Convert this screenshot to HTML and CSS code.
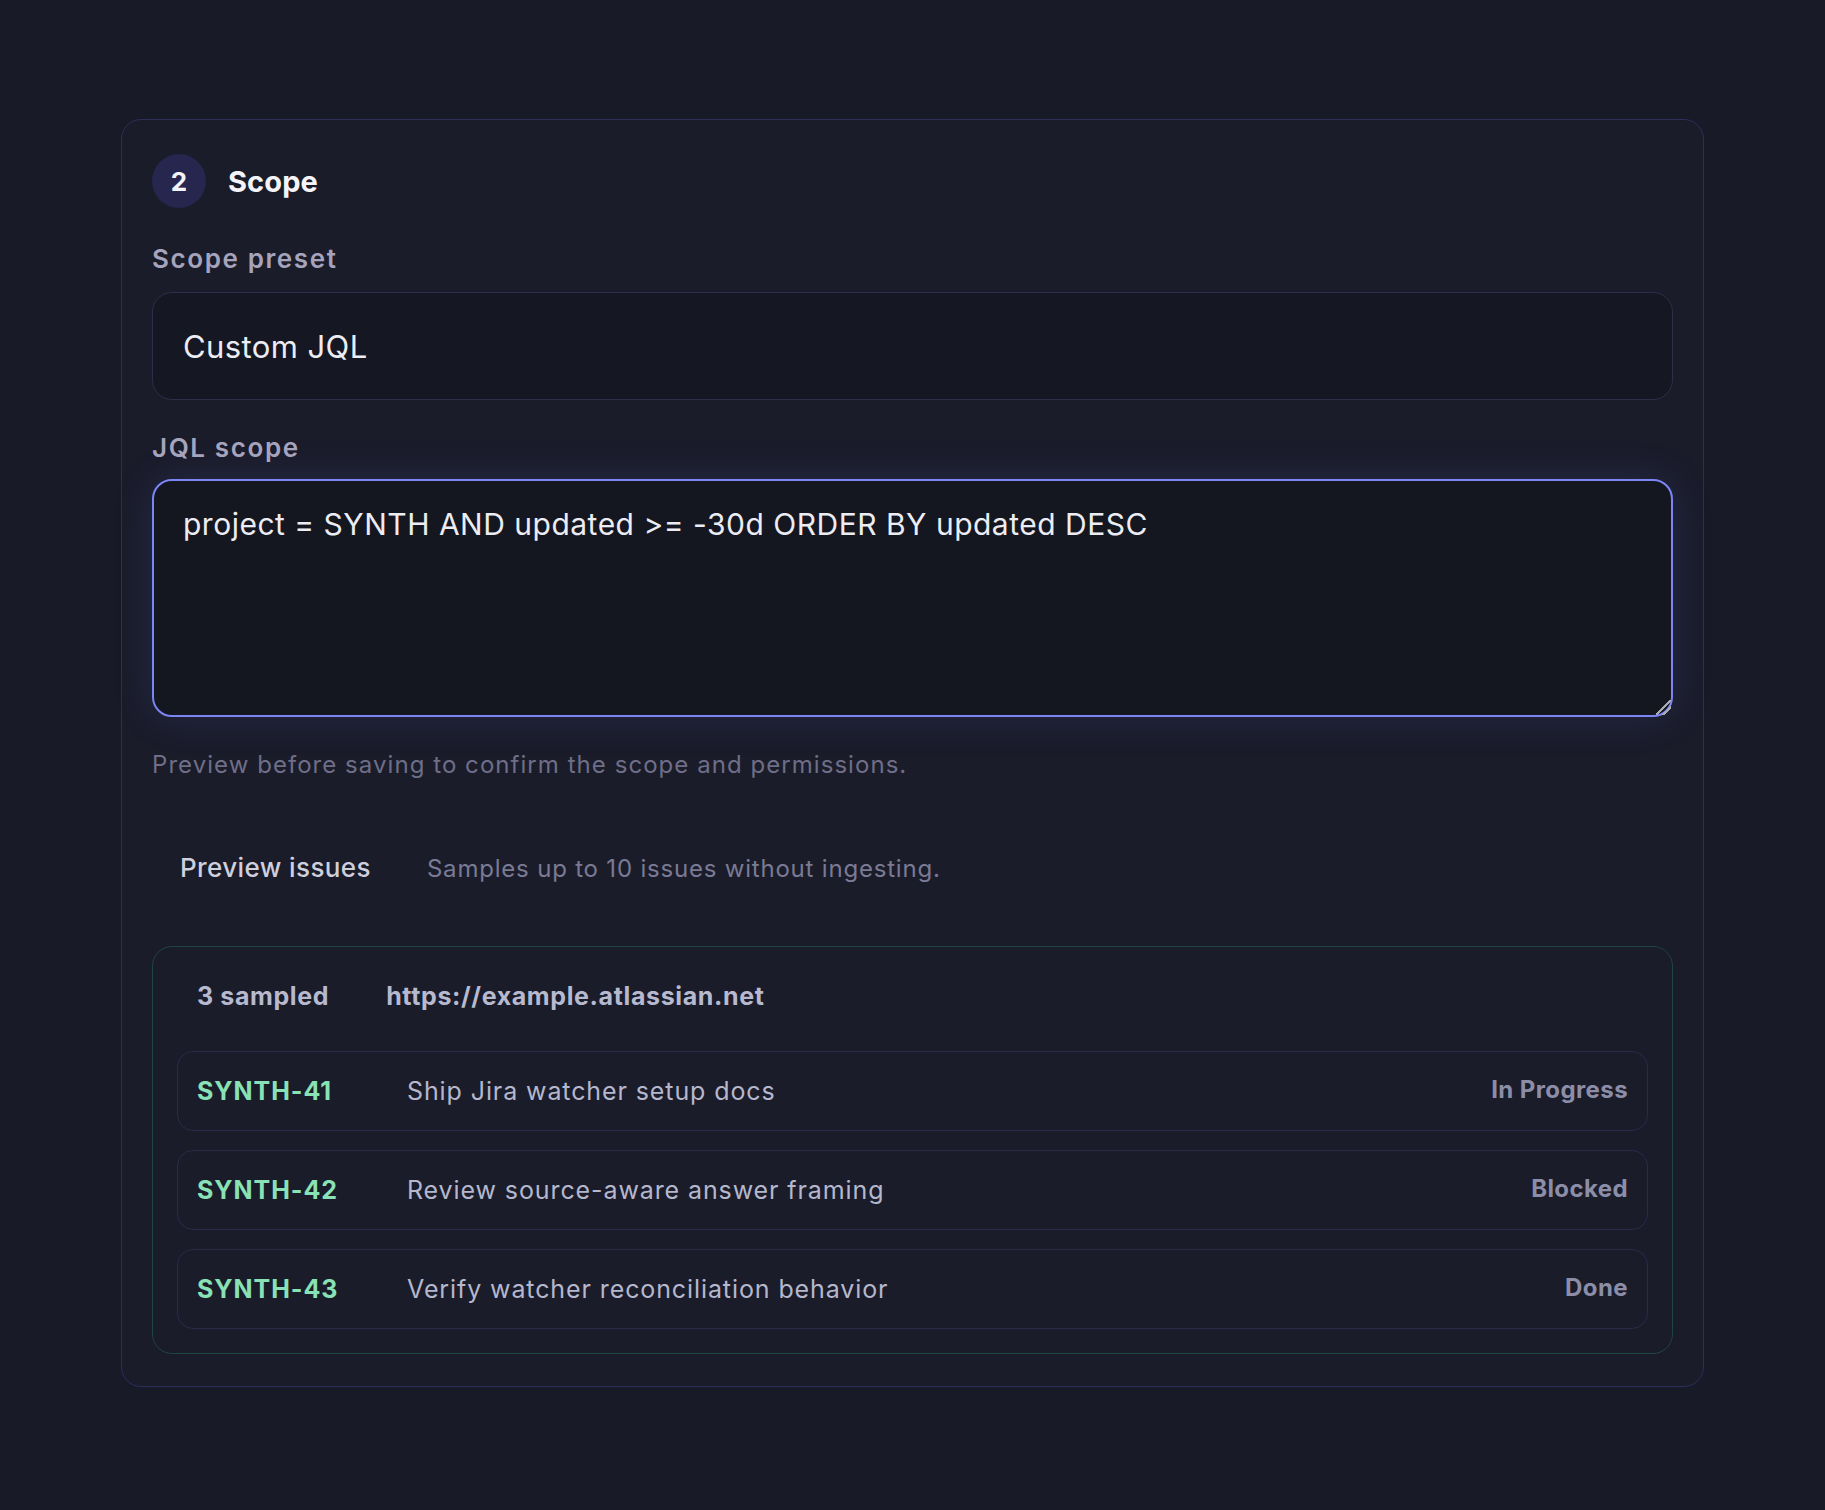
FILE: index.html
```html
<!DOCTYPE html>
<html lang="en">
<head>
<meta charset="utf-8">
<title>Scope</title>
<link rel="stylesheet" href="styles.css">
</head>
<body>
<main class="page">
  <section class="card">
    <header class="step-head">
      <span class="step-num">2</span>
      <h2 class="step-title">Scope</h2>
    </header>

    <div class="field field-first">
      <label class="field-label" for="preset">Scope preset</label>
      <div class="select" id="preset">Custom JQL</div>
    </div>

    <div class="field">
      <label class="field-label" for="jql">JQL scope</label>
      <textarea class="jql" id="jql" spellcheck="false">project = SYNTH AND updated &gt;= -30d ORDER BY updated DESC</textarea>
    </div>

    <p class="hint">Preview before saving to confirm the scope and permissions.</p>

    <div class="preview-bar">
      <button class="preview-btn" type="button">Preview issues</button>
      <span class="preview-note">Samples up to 10 issues without ingesting.</span>
    </div>

    <div class="results">
      <div class="results-head">
        <span class="count">3 sampled</span>
        <span class="site">https://example.atlassian.net</span>
      </div>
      <ul class="issues">
        <li class="issue">
          <span class="issue-key">SYNTH-41</span>
          <span class="issue-title">Ship Jira watcher setup docs</span>
          <span class="issue-status">In Progress</span>
        </li>
        <li class="issue">
          <span class="issue-key">SYNTH-42</span>
          <span class="issue-title">Review source-aware answer framing</span>
          <span class="issue-status">Blocked</span>
        </li>
        <li class="issue">
          <span class="issue-key">SYNTH-43</span>
          <span class="issue-title">Verify watcher reconciliation behavior</span>
          <span class="issue-status">Done</span>
        </li>
      </ul>
    </div>
  </section>
</main>
</body>
</html>
```

FILE: styles.css
```css
* {
  box-sizing: border-box;
}

html,
body {
  margin: 0;
  background: #181a27;
}

body {
  font-family: Inter, "Noto Sans", "Liberation Sans", sans-serif;
  color: #e9e9f1;
  min-height: 1510px;
}

.page {
  padding: 119px 0 0 121px;
}

.card {
  width: 1583px;
  border: 1px solid #2e2e5c;
  border-radius: 20px;
  background: #1a1c2a;
  padding: 34px 30px 32px;
}

/* header: numbered step + title */
.step-head {
  display: flex;
  align-items: center;
  gap: 22px;
  height: 54px;
}

.step-num {
  width: 54px;
  height: 54px;
  border-radius: 50%;
  background: #26264e;
  color: #f3f3fa;
  font-size: 26px;
  font-weight: 700;
  display: flex;
  align-items: center;
  justify-content: center;
}

.step-title {
  margin: 0;
  font-size: 29px;
  font-weight: 700;
  color: #f4f4f8;
  letter-spacing: 0.1px;
}

/* form fields */
.field {
  margin-top: 32px;
}

.field-first {
  margin-top: 35px;
}

.field-label {
  display: block;
  font-size: 26px;
  font-weight: 600;
  line-height: 32px;
  color: #a6a4bd;
  letter-spacing: 1.6px;
  margin-bottom: 17px;
}

.field + .field .field-label {
  margin-bottom: 15px;
}

.select {
  height: 108px;
  border: 1px solid #2d2e4a;
  border-radius: 20px;
  background: #151722;
  padding: 0 30px;
  display: flex;
  align-items: center;
  font-size: 31px;
  color: #ececf3;
  letter-spacing: 0.4px;
}

.jql {
  display: block;
  width: 100%;
  height: 238px;
  margin: 0;
  border: 2px solid #7c85f4;
  border-radius: 20px;
  background: #141620;
  padding: 22px 29px;
  font-family: inherit;
  font-size: 30px;
  line-height: 1.45;
  color: #ececf3;
  letter-spacing: 0.5px;
  resize: vertical;
  outline: none;
  color-scheme: dark;
  box-shadow: 0 0 40px rgba(108, 116, 240, 0.15);
}

/* resize grip: two light diagonal strokes */
.jql::-webkit-resizer {
  background:
    linear-gradient(135deg,
      transparent 0 46%,
      #a9a9b0 46% 54%,
      transparent 54% 70%,
      #a9a9b0 70% 78%,
      transparent 78%);
}

.hint {
  margin: 32px 0 0;
  font-size: 24px;
  line-height: 32px;
  color: #6f6e88;
  letter-spacing: 1.05px;
}

/* preview action row */
.preview-bar {
  display: flex;
  align-items: center;
  gap: 28px;
  height: 80px;
  margin-top: 46px;
}

.preview-btn {
  background: transparent;
  border: 0;
  padding: 0 28px;
  height: 80px;
  font-family: inherit;
  font-size: 26px;
  font-weight: 500;
  color: #cfcfdd;
  letter-spacing: 0.4px;
}

.preview-note {
  font-size: 24px;
  color: #7b7a94;
  letter-spacing: 0.8px;
  padding-top: 3px;
}

/* sampled issues */
.results {
  margin-top: 39px;
  border: 1px solid #1f4540;
  border-radius: 20px;
  padding: 23px 24px 24px;
}

.results-head {
  display: flex;
  align-items: center;
  gap: 57px;
  height: 52px;
  padding: 0 20px;
  font-size: 25px;
  font-weight: 700;
  color: #b7b9cf;
  letter-spacing: 0.62px;
  margin-bottom: 29px;
}

.issues {
  list-style: none;
  margin: 0;
  padding: 0;
  display: flex;
  flex-direction: column;
  gap: 19px;
}

.issue {
  display: grid;
  grid-template-columns: 210px 1fr auto;
  align-items: center;
  height: 80px;
  border: 1px solid #292b48;
  border-radius: 16px;
  padding: 0 19px;
}

.issue-key {
  font-size: 25px;
  font-weight: 700;
  color: #88e2b6;
  letter-spacing: 0.95px;
}

.issue-title {
  font-size: 25px;
  color: #b5b7cd;
  letter-spacing: 0.9px;
}

.issue-status {
  font-size: 24px;
  font-weight: 700;
  color: #8c8ea8;
  letter-spacing: 0.4px;
  margin-top: -3px;
}
```
